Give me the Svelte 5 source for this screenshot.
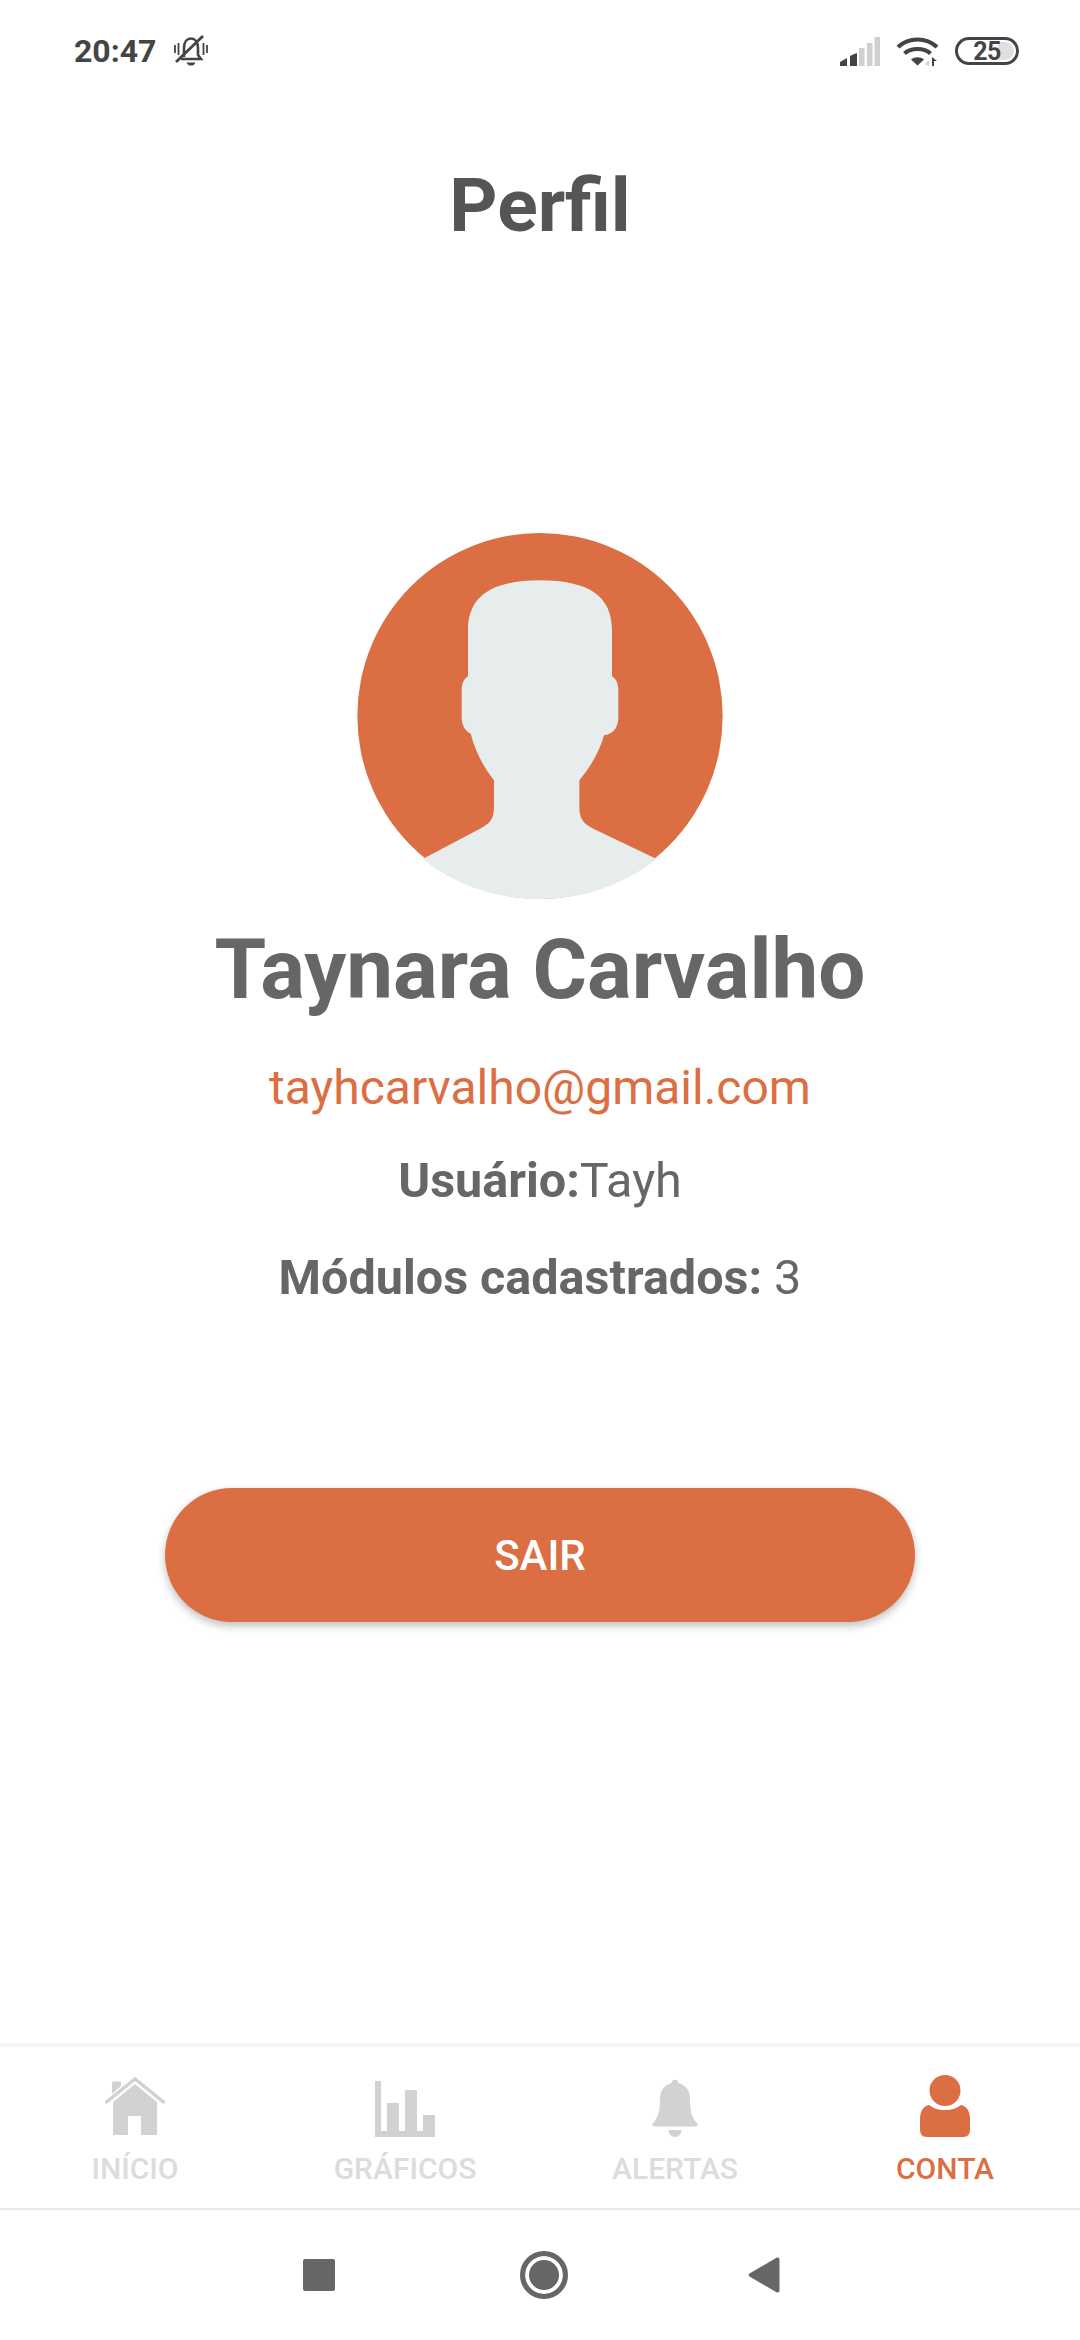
<script>
  const tabs = [
    { id: 'inicio', label: 'INÍCIO' },
    { id: 'graficos', label: 'GRÁFICOS' },
    { id: 'alertas', label: 'ALERTAS' },
    { id: 'conta', label: 'CONTA' }
  ];
  let active = $state('conta');
</script>

<div class="page">
  <div class="status">
    <div class="status-left">
      <span class="time">20:47</span>
      <svg class="mute" width="34" height="32" viewBox="0 0 34 32">
        <path d="M10 22 L10 13 C10 7 13 3.500 17 3.500 C21 3.500 24 7 24 13 L24 20 L27 24 L7 24" fill="none" stroke="#444" stroke-width="2.600"/>
        <path d="M12.500 27.500 H21.500 C20.500 30 18.800 30.500 17 30.500 C15.200 30.500 13.500 30 12.500 27.500Z" fill="#444"/>
        <path d="M2 27 L29 1" stroke="#444" stroke-width="2.800"/>
        <path d="M1 10 V18 M4.500 8 V20 M29.500 8 V20 M33 10 V18" stroke="#444" stroke-width="1.800"/>
      </svg>
    </div>
    <div class="status-right">
      <svg width="40" height="29" viewBox="0 0 40 29">
        <path d="M0 29 V25 L7 21 V29Z" fill="#444"/>
        <path d="M10 29 V19 C12 18 14 17 17 16 V29Z" fill="#444"/>
        <rect x="19" y="11" width="5.500" height="18" fill="#d0d0d0"/>
        <rect x="27" y="6" width="5.500" height="23" fill="#d0d0d0"/>
        <rect x="34.500" y="0" width="5.500" height="29" fill="#d0d0d0"/>
      </svg>
      <svg class="wifi" width="43" height="30" viewBox="0 0 43 30">
        <path d="M2 11 C13 1 30 1 41 11" fill="none" stroke="#444" stroke-width="4.200"/>
        <path d="M8.500 17.500 C15 11.500 28 11.500 34.500 17.500" fill="none" stroke="#444" stroke-width="4.200"/>
        <path d="M15 23.500 C18.500 20.500 24.500 20.500 28 23.500 L21.500 29.500Z" fill="#444"/>
        <path d="M33 30 V24 L29 28 Z" fill="#d0d0d0"/>
        <path d="M36 21 V30 H38 V25 L41 25 Z" fill="#444"/>
      </svg>
      <div class="battery">
        <span class="level"></span>
        <span class="pct">25</span>
      </div>
    </div>
  </div>

  <h1>Perfil</h1>

  <svg class="avatar" width="366" height="366" viewBox="52 38 1096 1098">
    <ellipse cx="600" cy="587" rx="548" ry="549" fill="#db6f43"/>
    <path d="M248 1016 L420 925 C450 910 462 895 462 860 L462 780 C430 740 405 690 392 640 C372 630 365 610 365 590 L365 510 C365 490 372 475 384 468 L384 330 C384 230 450 180 600 180 C750 180 816 230 816 330 L816 468 C828 475 835 490 835 510 L835 590 C835 615 825 640 792 645 C780 690 755 735 718 780 L718 860 C718 895 730 910 760 925 L950 1016 C850 1095 725 1136 600 1136 C470 1136 345 1095 248 1016Z" fill="#e7ecec"/>
  </svg>

  <h2>Taynara Carvalho</h2>
  <p class="email">tayhcarvalho@gmail.com</p>
  <p class="info"><strong>Usuário:</strong>Tayh</p>
  <p class="info second"><strong>Módulos cadastrados:</strong> 3</p>

  <button class="logout">SAIR</button>

  <nav class="tabs">
    {#each tabs as tab (tab.id)}
      <button class="tab" class:active={active === tab.id} onclick={() => active = tab.id}>
        <span class="tab-icon">
          {#if tab.id === 'inicio'}
            <svg width="60" height="60" viewBox="0 0 60 60">
              <path d="M8 58 V25 L30 7 L52 25 V58 H36 V39 H23 V58Z" fill="currentColor"/>
              <path d="M1.500 25 L30 2 L58.500 25" fill="none" stroke="currentColor" stroke-width="3.500" stroke-linecap="round"/>
              <path d="M7 4.500 H16 V9 L7 17Z" fill="currentColor"/>
            </svg>
          {:else if tab.id === 'graficos'}
            <svg width="60" height="56" viewBox="0 0 60 56">
              <path d="M0 0 H6 V50 H12 V22 H24 V50 H30 V9 H42 V50 H48 V34 H60 V56 H0Z" fill="currentColor"/>
            </svg>
          {:else if tab.id === 'alertas'}
            <svg width="46" height="58" viewBox="0 0 46 58">
              <path d="M19.500 4 C19.500 -0.500 26.500 -0.500 26.500 4 C34 6 38 12 38 20 C38 32 40 39 45 44 C46.500 46 45.500 47.500 43.500 47.500 H2.500 C0.500 47.500 -0.500 46 1 44 C6 39 8 32 8 20 C8 12 12 6 19.500 4Z" fill="currentColor"/>
              <path d="M16.500 51 H29.500 C29.500 55 26.500 58 23 58 C19.500 58 16.500 55 16.500 51Z" fill="currentColor"/>
            </svg>
          {:else}
            <svg width="52" height="62" viewBox="0 0 52 62">
              <circle cx="26" cy="15.500" r="15.500" fill="currentColor"/>
              <path d="M10 30 C14 33 19 35 26 35 C33 35 38 33 42 30 C48 31 51 37 51 44 V54 C51 59 49 62 44 62 H8 C3 62 1 59 1 54 V44 C1 37 4 31 10 30Z" fill="currentColor"/>
            </svg>
          {/if}
        </span>
        <span class="tab-label">{tab.label}</span>
      </button>
    {/each}
  </nav>

  <div class="android-nav">
    <span class="nav-square"></span>
    <span class="nav-circle"></span>
    <svg class="nav-back" width="32" height="36" viewBox="0 0 32 36">
      <path d="M1.500 16.500 L28.500 0.800 C30 0 31.500 0.800 31.500 2.500 V33.500 C31.500 35.200 30 36 28.500 35.200 L1.500 19.500 C0.300 18.700 0.300 17.300 1.500 16.500Z" fill="#666"/>
    </svg>
  </div>
</div>

<style>
  :global(body) {
    margin: 0;
    background: #fff;
    font-family: Roboto, "Noto Sans", sans-serif;
  }

  .page {
    width: 1080px;
    height: 2340px;
    display: flex;
    flex-direction: column;
    align-items: center;
    background: #fff;
    overflow: hidden;
  }

  .status {
    width: 100%;
    height: 102px;
    flex: none;
    box-sizing: border-box;
    padding: 0 61px 0 74px;
    display: flex;
    justify-content: space-between;
    align-items: center;
  }

  .status-left, .status-right {
    display: flex;
    align-items: center;
  }

  .time {
    font-size: 32px;
    font-weight: 700;
    color: #444;
  }

  .mute {
    margin-left: 18px;
  }

  .status-right svg {
    display: block;
  }

  .wifi {
    margin-left: 16px;
  }

  .battery {
    position: relative;
    margin-left: 16px;
    width: 64px;
    height: 28px;
    box-sizing: border-box;
    border: 3.5px solid #444;
    border-radius: 14px;
    display: flex;
    align-items: center;
    justify-content: center;
  }

  .level {
    position: absolute;
    top: 2px;
    bottom: 2px;
    right: 2px;
    width: 16px;
    background: #e0e0e0;
    border-radius: 0 10px 10px 0;
  }

  .pct {
    position: relative;
    font-size: 25px;
    font-weight: 700;
    color: #444;
    letter-spacing: -0.5px;
  }

  h1 {
    margin: 59px 0 0;
    font-size: 75px;
    line-height: 88px;
    font-weight: 700;
    color: #555;
  }

  .avatar {
    display: block;
    margin-top: 284px;
    flex: none;
  }

  h2 {
    margin: 22px 0 0;
    font-size: 83.5px;
    line-height: 98px;
    font-weight: 700;
    color: #666;
  }

  .email {
    margin: 42px 0 0;
    font-size: 48px;
    line-height: 54px;
    color: #db6f43;
  }

  .info {
    margin: 39px 0 0;
    font-size: 48.5px;
    line-height: 54px;
    color: #666;
    font-weight: 400;
  }

  .info strong {
    font-weight: 700;
  }

  .second {
    margin-top: 43px;
  }

  .logout {
    margin-top: 183px;
    width: 750px;
    height: 134px;
    flex: none;
    border: none;
    border-radius: 67px;
    background: #db6f43;
    color: #fff;
    font-family: inherit;
    font-size: 42px;
    font-weight: 500;
    box-shadow: 0 4px 8px rgba(0, 0, 0, 0.25);
  }

  .tabs {
    margin-top: auto;
    width: 100%;
    height: 167px;
    flex: none;
    box-sizing: border-box;
    border-top: 4px solid #f5f5f5;
    border-bottom: 2px solid #e8e8e8;
    display: grid;
    grid-template-columns: repeat(4, 1fr);
  }

  .tab {
    border: none;
    background: none;
    padding: 0;
    font-family: inherit;
    color: #d2d2d2;
    display: flex;
    flex-direction: column;
    align-items: center;
  }

  .tab.active {
    color: #db6f43;
  }

  .tab-icon {
    height: 90px;
    display: flex;
    align-items: flex-end;
  }

  .tab-icon svg {
    display: block;
  }

  .tab-label {
    margin-top: 15px;
    font-size: 30px;
    line-height: 34px;
    font-weight: 500;
    color: #dcdcdc;
  }

  .tab.active .tab-label {
    color: #db6f43;
  }

  .android-nav {
    width: 100%;
    height: 130px;
    flex: none;
    position: relative;
    display: flex;
    align-items: center;
  }

  .nav-square {
    margin-left: 303px;
    width: 32px;
    height: 32px;
    background: #666;
    border-radius: 2px;
  }

  .nav-circle {
    margin-left: 185px;
    width: 48px;
    height: 48px;
    box-sizing: border-box;
    border-radius: 50%;
    border: 5px solid #666;
    background: #666;
    box-shadow: inset 0 0 0 4px #fff;
  }

  .nav-back {
    margin-left: 180px;
  }
</style>
